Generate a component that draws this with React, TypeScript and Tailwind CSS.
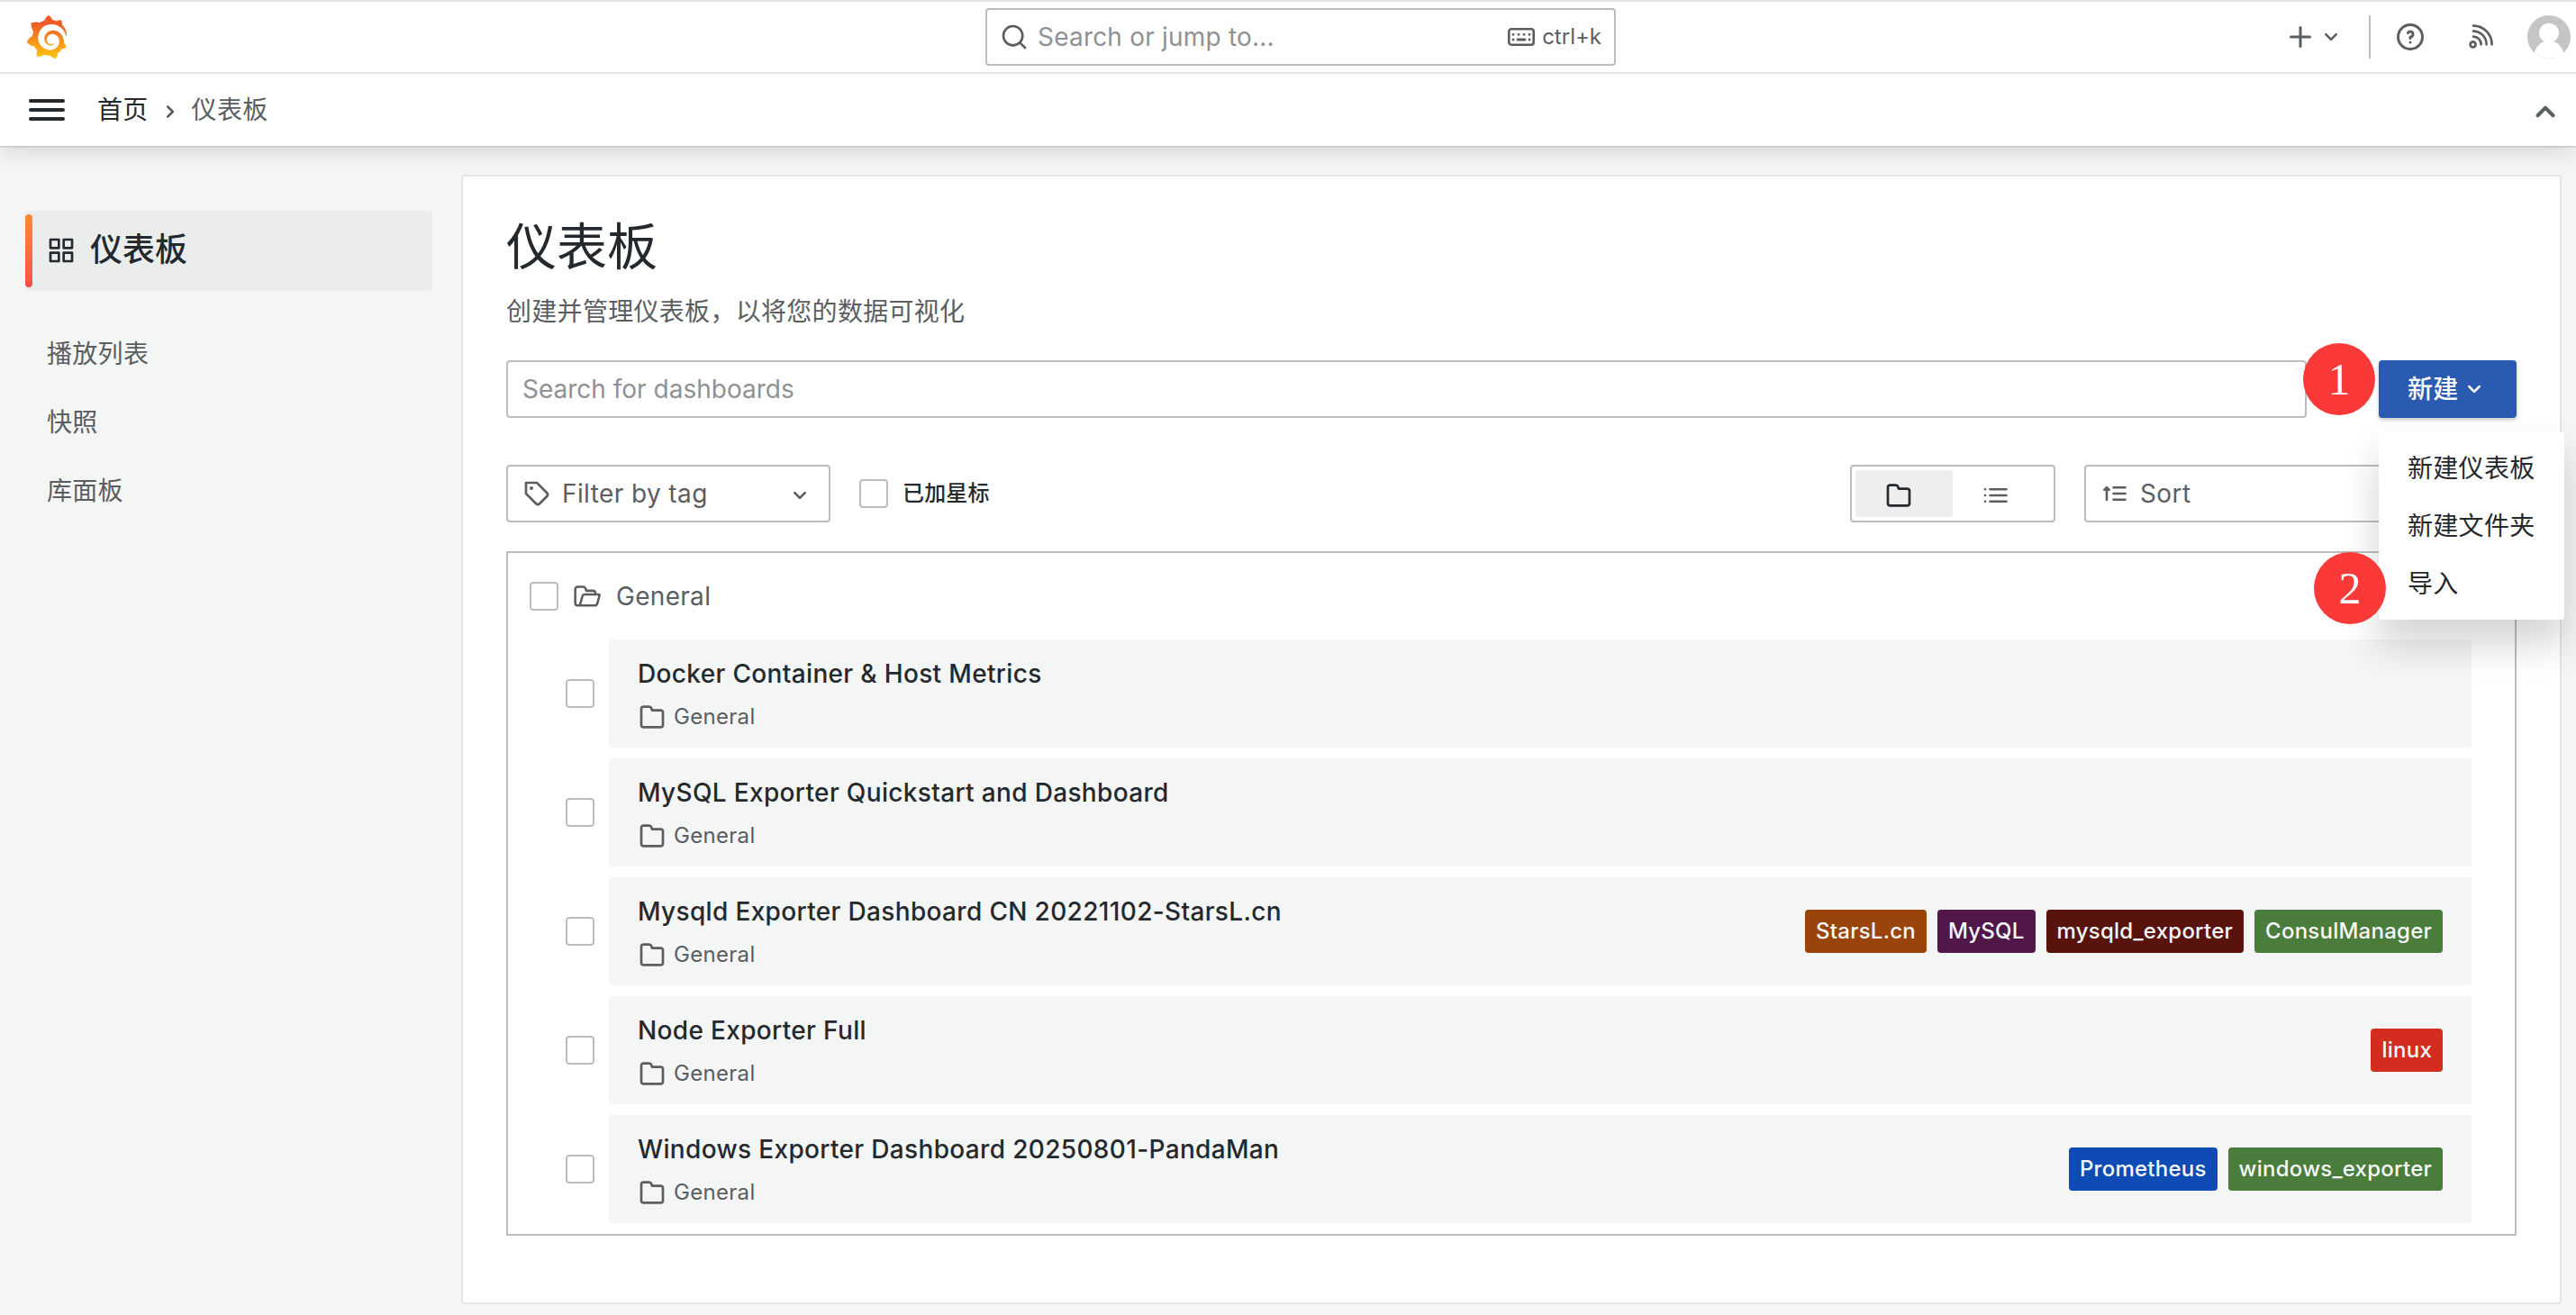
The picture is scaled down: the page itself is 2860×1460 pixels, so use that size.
import type { ReactNode } from "react";
import { SiGrafana } from "react-icons/si";
import clsx from "clsx";

const ICONS = {
  search:
    "M21.71,20.29,18,16.61A9,9,0,1,0,16.61,18l3.68,3.68a1,1,0,0,0,1.42,0A1,1,0,0,0,21.71,20.29ZM11,18a7,7,0,1,1,7-7A7,7,0,0,1,11,18Z",
  plus: "M19,11H13V5a1,1,0,0,0-2,0v6H5a1,1,0,0,0,0,2h6v6a1,1,0,0,0,2,0V13h6a1,1,0,0,0,0-2Z",
  angleDown:
    "M17,9.17a1,1,0,0,0-1.41,0L12,12.71,8.46,9.17a1,1,0,0,0-1.41,0,1,1,0,0,0,0,1.42l4.24,4.24a1,1,0,0,0,1.42,0L17,10.59A1,1,0,0,0,17,9.17Z",
  angleUp:
    "M17,13.41,12.71,9.17a1,1,0,0,0-1.42,0L7.05,13.41a1,1,0,0,0,0,1.42,1,1,0,0,0,1.41,0L12,11.29l3.54,3.54a1,1,0,0,0,.7.29,1,1,0,0,0,.71-.29A1,1,0,0,0,17,13.41Z",
  angleRight:
    "M14.83,11.29,10.59,7.05a1,1,0,0,0-1.42,0,1,1,0,0,0,0,1.41L12.71,12,9.17,15.54a1,1,0,0,0,0,1.41,1,1,0,0,0,.71.29,1,1,0,0,0,.71-.29l4.24-4.24A1,1,0,0,0,14.83,11.29Z",
  question:
    "M11.29,15.29a1.58,1.58,0,0,0-.12.15.76.76,0,0,0-.09.18.64.64,0,0,0-.06.18,1.36,1.36,0,0,0,0,.2.84.84,0,0,0,.08.38.9.9,0,0,0,.54.54.94.94,0,0,0,.76,0,.9.9,0,0,0,.54-.54A1,1,0,0,0,13,16a1,1,0,0,0-.29-.71A1,1,0,0,0,11.29,15.29ZM12,2A10,10,0,1,0,22,12,10,10,0,0,0,12,2Zm0,18a8,8,0,1,1,8-8A8,8,0,0,1,12,20ZM12,7A3,3,0,0,0,9.4,8.5a1,1,0,1,0,1.73,1A1,1,0,0,1,12,9a1,1,0,0,1,0,2,1,1,0,0,0-1,1v1a1,1,0,0,0,2,0v-.18A3,3,0,0,0,12,7Z",
  apps: "M10,13H3a1,1,0,0,0-1,1v7a1,1,0,0,0,1,1h7a1,1,0,0,0,1-1V14A1,1,0,0,0,10,13ZM9,20H4V15H9ZM21,2H14a1,1,0,0,0-1,1v7a1,1,0,0,0,1,1h7a1,1,0,0,0,1-1V3A1,1,0,0,0,21,2ZM20,9H15V4h5Zm1,4H14a1,1,0,0,0-1,1v7a1,1,0,0,0,1,1h7a1,1,0,0,0,1-1V14A1,1,0,0,0,21,13Zm-1,7H15V15h5ZM10,2H3A1,1,0,0,0,2,3v7a1,1,0,0,0,1,1h7a1,1,0,0,0,1-1V3A1,1,0,0,0,10,2ZM9,9H4V4H9Z",
  tag: "M7.5,6A1.5,1.5,0,1,0,9,7.5,1.5,1.5,0,0,0,7.5,6Zm13.62,4.71L12.71,2.29A1,1,0,0,0,12,2H3A1,1,0,0,0,2,3v9a1,1,0,0,0,.29.71l8.42,8.41a3,3,0,0,0,4.24,0L21.12,15a3,3,0,0,0,0-4.24Zm-1.41,2.82h0l-6.18,6.17a1,1,0,0,1-1.41,0L4,11.59V4h7.59l8.12,8.12a1,1,0,0,1,.29.71A1,1,0,0,1,19.71,13.53Z",
  folder:
    "M19,5.5H12.72l-.32-1a3,3,0,0,0-2.84-2H5a3,3,0,0,0-3,3v13a3,3,0,0,0,3,3H19a3,3,0,0,0,3-3V8.5A3,3,0,0,0,19,5.5Zm1,13a1,1,0,0,1-1,1H5a1,1,0,0,1-1-1V5.5a1,1,0,0,1,1-1H9.56a1,1,0,0,1,.95.68l.54,1.64A1,1,0,0,0,12,7.5h7a1,1,0,0,1,1,1Z",
};

interface Tag {
  label: string;
  color: string;
}

interface Dashboard {
  title: string;
  tags: Tag[];
}

const dashboards: Dashboard[] = [
  { title: "Docker Container & Host Metrics", tags: [] },
  { title: "MySQL Exporter Quickstart and Dashboard", tags: [] },
  {
    title: "Mysqld Exporter Dashboard CN 20221102-StarsL.cn",
    tags: [
      { label: "StarsL.cn", color: "bg-[#99440a]" },
      { label: "MySQL", color: "bg-[#511749]" },
      { label: "mysqld_exporter", color: "bg-[#58140c]" },
      { label: "ConsulManager", color: "bg-[#4a7c3c]" },
    ],
  },
  { title: "Node Exporter Full", tags: [{ label: "linux", color: "bg-[#d32d20]" }] },
  {
    title: "Windows Exporter Dashboard 20250801-PandaMan",
    tags: [
      { label: "Prometheus", color: "bg-[#0f4bb4]" },
      { label: "windows_exporter", color: "bg-[#4a7c3c]" },
    ],
  },
];

function Icon({ name, className }: { name: keyof typeof ICONS; className?: string }) {
  return (
    <svg viewBox="0 0 24 24" fill="currentColor" className={clsx("shrink-0", className ?? "size-8")}>
      <path d={ICONS[name]} />
    </svg>
  );
}

function KeyboardIcon() {
  return (
    <svg viewBox="0 0 30 20" className="h-5 w-[30px] shrink-0" fill="none" stroke="currentColor">
      <rect x="1.3" y="1.3" width="27.4" height="17.4" rx="2.6" strokeWidth="2.6" />
      <path d="M6 7.3h.1M12 7.3h.1M18 7.3h.1M24 7.3h.1M6 13h.1M24 13h.1M11 13h8" strokeWidth="2.8" strokeLinecap="round" />
    </svg>
  );
}

function NewsIcon() {
  return (
    <svg viewBox="0 0 28 28" className="size-7 shrink-0" fill="none" stroke="currentColor" strokeWidth="2.7" strokeLinecap="round">
      <circle cx="4.6" cy="22.4" r="3" />
      <path d="M5 1.6A20.6 20.6 0 0 1 25.6 22.3M5 7.6A14.6 14.6 0 0 1 19.6 22.3M5 13.6A8.6 8.6 0 0 1 13.6 22.3" />
    </svg>
  );
}

function FolderOpenIcon() {
  return (
    <svg viewBox="0 0 24 24" className="size-8 shrink-0" fill="none" stroke="currentColor" strokeWidth="1.9" strokeLinejoin="round">
      <path d="M18.7 10.8V9.4a2 2 0 0 0-2-2h-5.5l-.6-1.9a1.9 1.9 0 0 0-1.8-1.3H3.9a1.9 1.9 0 0 0-1.9 1.9v11.6a2 2 0 0 0 2 2h14a2.6 2.6 0 0 0 2.5-2l1.7-6.3a.7.7 0 0 0-.7-.9H9.7a1.7 1.7 0 0 0-1.7 1.3L5.9 19.4" />
    </svg>
  );
}

function ListIcon() {
  return (
    <svg viewBox="0 0 28 20" className="h-5 w-7 shrink-0" fill="none" stroke="currentColor" strokeWidth="2.6" strokeLinecap="round">
      <path d="M7.5 3.3h18M7.5 10h18M7.5 16.7h18M2 3.3h.1M2 10h.1M2 16.7h.1" />
    </svg>
  );
}

function SortIcon() {
  return (
    <svg viewBox="0 0 28 20" className="h-5 w-7 shrink-0" fill="none" stroke="currentColor" strokeWidth="2.6" strokeLinecap="round" strokeLinejoin="round">
      <path d="M12.5 3.3h13M12.5 10h13M12.5 16.7h13M5 17V4.5M2.3 5.8L5 3.1l2.7 2.7" />
    </svg>
  );
}

function Avatar() {
  return (
    <svg viewBox="0 0 48 48" className="size-12 shrink-0">
      <defs>
        <clipPath id="avatar">
          <circle cx="24" cy="24" r="24" />
        </clipPath>
      </defs>
      <g clipPath="url(#avatar)">
        <rect width="48" height="48" fill="#c5c5c5" />
        <ellipse cx="24" cy="19.5" rx="11" ry="10.8" fill="#fff" />
        <ellipse cx="24" cy="46" rx="17" ry="17.5" fill="#fff" />
      </g>
    </svg>
  );
}

function Checkbox() {
  return <span className="size-8 shrink-0 rounded border-2 border-[#bdbdbe] bg-white" />;
}

function TopBar() {
  return (
    <div className="flex h-[82px] items-center border-y-2 border-[#e3e3e3] bg-white pr-1.5 text-[#5b5e61]">
      <div className="w-[1094px] pl-7">
        <svg width="0" height="0" className="absolute">
          <linearGradient id="grafana" x1="0" y1="0" x2="0" y2="1">
            <stop offset="0.2" stopColor="#f05a28" />
            <stop offset="0.6" stopColor="#f8931d" />
            <stop offset="1" stopColor="#fcc60e" />
          </linearGradient>
        </svg>
        <SiGrafana className="size-12" fill="url(#grafana)" />
      </div>
      <div className="flex h-16 w-[700px] items-center rounded border-2 border-[#bdbdbe] pr-3.5 pl-3.5">
        <Icon name="search" />
        <span className="ml-2.5 tracking-[0.2px] text-[#8f9193]">Search or jump to...</span>
        <span className="ml-auto flex items-center gap-2 text-2xl tracking-normal">
          <KeyboardIcon />
          ctrl+k
        </span>
      </div>
      <div className="flex flex-1 items-center justify-end">
        <Icon name="plus" className="size-9" />
        <Icon name="angleDown" />
        <span className="ml-[26px] h-12 w-0.5 bg-[#bdbdbe]" />
        <Icon name="question" className="mr-[47px] ml-[26px] size-9" />
        <NewsIcon />
        <span className="ml-[37px]">
          <Avatar />
        </span>
      </div>
    </div>
  );
}

function Breadcrumbs() {
  return (
    <div className="flex h-20 items-center bg-white pr-[10px] pl-8 text-[#5b5e61]">
      <div className="flex w-10 flex-col gap-1.5">
        <span className="h-1 rounded-full bg-[#24292e]" />
        <span className="h-1 rounded-full bg-[#24292e]" />
        <span className="h-1 rounded-full bg-[#24292e]" />
      </div>
      <span className="ml-9 text-[#24292e]">首页</span>
      <Icon name="angleRight" className="mt-1 ml-2 size-8" />
      <span className="ml-2">仪表板</span>
      <Icon name="angleUp" className="mt-1 ml-auto size-12" />
    </div>
  );
}

function Sidebar() {
  return (
    <nav className="w-[512px] pt-[72px] pr-8 pl-7">
      <div className="flex h-[89px] items-center rounded bg-[#ebeded] text-4xl font-medium tracking-normal text-[#24292e]">
        <span className="h-[81px] w-2 rounded-full bg-linear-to-b from-[#ff8833] to-[#f94f49]" />
        <Icon name="apps" className="mr-4 mb-0.5 ml-4 size-8" />
        <span className="pb-[3px]">仪表板</span>
      </div>
      <ul className="mt-8 pl-6 text-[#5b5e61]">
        {["播放列表", "快照", "库面板"].map((item) => (
          <li key={item} className="flex h-[76px] items-center">
            {item}
          </li>
        ))}
      </ul>
    </nav>
  );
}

function Step({ children, className }: { children: ReactNode; className: string }) {
  return (
    <span
      className={clsx(
        "absolute z-20 flex size-20 items-center justify-center rounded-full bg-[#fc3939] font-['Liberation_Serif',serif] text-[50px] leading-none tracking-normal text-white",
        className
      )}
    >
      {children}
    </span>
  );
}

function NewButton() {
  return (
    <div className="relative">
      <button className="flex h-16 w-[153px] items-center rounded bg-[#2b5ab1] pl-8 font-medium text-white shadow-[0_2px_4px_rgba(24,26,27,0.25)]">
        新建
        <Icon name="angleDown" className="ml-px size-8" />
      </button>
      <Step className="top-[-19px] left-[-84px]">1</Step>
      <div className="absolute top-20 left-0 z-10 w-[206px] rounded bg-white py-2 shadow-[0_26px_40px_2px_rgba(24,26,27,0.18)]">
        {["新建仪表板", "新建文件夹", "导入"].map((item) => (
          <div key={item} className="flex h-16 items-center pl-8 whitespace-nowrap">
            {item}
          </div>
        ))}
      </div>
      <Step className="top-[213px] left-[-72px]">2</Step>
    </div>
  );
}

function Filters() {
  return (
    <div className="mt-[52px] flex items-center text-[#5b5e61]">
      <div className="flex h-16 w-[360px] items-center rounded border-2 border-[#bdbdbe] pr-4 pl-4">
        <Icon name="tag" />
        <span className="ml-3 tracking-[0.4px]">Filter by tag</span>
        <Icon name="angleDown" className="mt-1 ml-auto size-8" />
      </div>
      <div className="ml-8 flex items-center gap-4 text-2xl font-medium tracking-[0.15px] text-[#24292e]">
        <Checkbox />
        已加星标
      </div>
      <div className="ml-auto flex h-16 w-[228px] items-center rounded border-2 border-[#bdbdbe] p-1">
        <span className="flex h-[52px] w-[108px] items-center justify-center rounded bg-[#eeeeee] pr-3 text-[#24292e]">
          <Icon name="folder" className="mt-1 size-8" />
        </span>
        <span className="mt-1 flex flex-1 justify-center pr-3">
          <ListIcon />
        </span>
      </div>
      <div className="ml-8 flex h-16 w-[480px] items-center gap-3.5 rounded border-2 border-[#bdbdbe] pl-[18px] tracking-[0.4px]">
        <SortIcon />
        Sort
      </div>
    </div>
  );
}

function DashboardRow({ dashboard }: { dashboard: Dashboard }) {
  return (
    <li className="flex items-center gap-4">
      <Checkbox />
      <div className="flex h-[120px] flex-1 items-center justify-between rounded bg-[#f4f5f5] px-8">
        <div>
          <h2 className="leading-[44px] font-medium tracking-[0.34px]">{dashboard.title}</h2>
          <div className="mt-2 flex h-9 items-center gap-2 text-2xl leading-9 tracking-[0.3px] text-[#5b5e61]">
            <Icon name="folder" />
            General
          </div>
        </div>
        <div className="flex gap-3">
          {dashboard.tags.map((tag) => (
            <span
              key={tag.label}
              className={clsx("flex h-12 items-center rounded px-3 text-2xl font-medium tracking-[0.24px] text-[#f7f8fa]", tag.color)}
            >
              {tag.label}
            </span>
          ))}
        </div>
      </div>
    </li>
  );
}

export default function App() {
  return (
    <div className="flex h-[1460px] w-[2860px] flex-col overflow-hidden bg-[#f4f5f5] font-['Inter','Noto_Sans_CJK_SC',sans-serif] text-[28px] leading-[44px] tracking-[0.3px] text-[#24292e]">
      <header className="relative z-10 shadow-[0_1px_2px_rgba(24,26,27,0.2),0_8px_24px_rgba(24,26,27,0.12)]">
        <TopBar />
        <Breadcrumbs />
      </header>
      <div className="flex">
        <Sidebar />
        <main className="mt-8 h-[1254px] w-[2332px] rounded border-2 border-[#e4e5e5] bg-white px-12 pt-[46px]">
          <h1 className="text-[56px] leading-[64px] tracking-normal">仪表板</h1>
          <p className="mt-[18px] text-[#5b5e61]">创建并管理仪表板，以将您的数据可视化</p>
          <div className="mt-8 flex justify-between">
            <div className="flex h-16 w-[1999px] items-center rounded border-2 border-[#bdbdbe] px-4 tracking-normal text-[#8f9193]">
              Search for dashboards
            </div>
            <NewButton />
          </div>
          <Filters />
          <section className="mt-8 h-[760px] border-2 border-[#bdbdbe] pr-12 pl-6">
            <div className="flex h-24 items-center text-[#5b5e61]">
              <Checkbox />
              <span className="mr-4 ml-4">
                <FolderOpenIcon />
              </span>
              General
            </div>
            <ul className="flex flex-col gap-3 pl-10">
              {dashboards.map((dashboard) => (
                <DashboardRow key={dashboard.title} dashboard={dashboard} />
              ))}
            </ul>
          </section>
        </main>
      </div>
    </div>
  );
}
